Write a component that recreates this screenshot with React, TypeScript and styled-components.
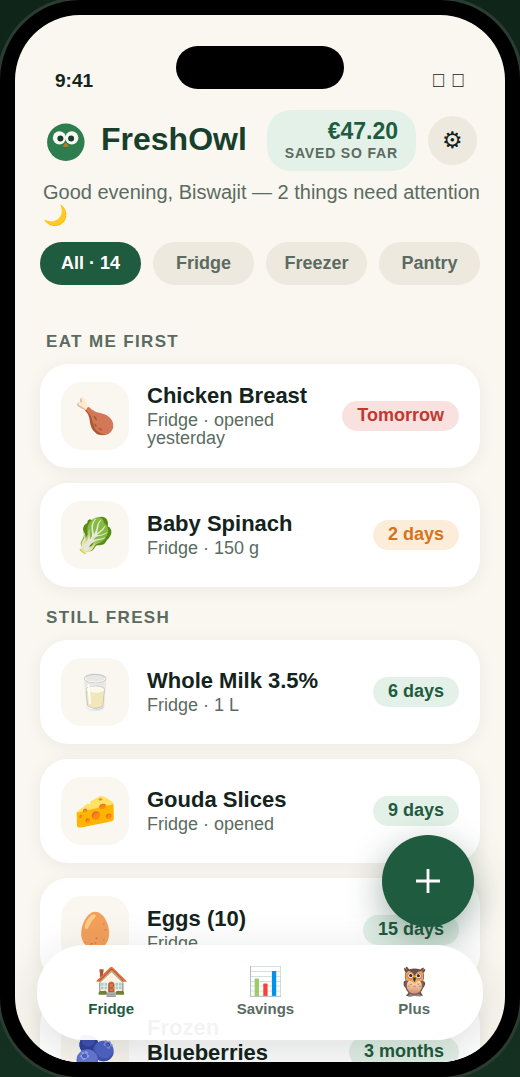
import React from 'react';
import styled, { createGlobalStyle, css } from 'styled-components';

const color = {
  cream: '#faf7f0',
  sand: '#ede9de',
  ink: '#14241c',
  muted: '#5b6b62',
  green: '#1f5c3f',
  deep: '#173f2c',
  mint: '#e3f1e8',
};

const GlobalStyle = createGlobalStyle`
  *, *::before, *::after { box-sizing: border-box; }
  body {
    margin: 0;
    background: linear-gradient(180deg, #10251a 0%, #143021 100%);
    font-family: "Liberation Sans", Arial, sans-serif;
    color: ${color.ink};
  }
  button { font-family: inherit; border: 0; cursor: pointer; padding: 0; }
  h1, h2, h3, p, ul { margin: 0; padding: 0; }
  ul { list-style: none; }
`;

const Phone = styled.div`
  height: 100vh;
  padding: 15px;
  background: #000;
  border-radius: 80px;
  box-shadow: 0 0 0 3px #2b3d33;
  overflow: hidden;
`;

const Screen = styled.div`
  position: relative;
  display: flex;
  flex-direction: column;
  height: 100%;
  background: ${color.cream};
  border-radius: 65px;
  overflow: hidden;
`;

const Island = styled.div`
  position: absolute;
  top: 31px;
  left: 50%;
  width: 168px;
  height: 43px;
  border-radius: 22px;
  background: #000;
  transform: translateX(-50%);
`;

const StatusBar = styled.div`
  display: flex;
  justify-content: space-between;
  padding: 55px 40px 18px;
  font-size: 19px;
  line-height: 22px;
  font-weight: 700;
`;

const StatusIcons = styled.span`
  font-weight: 400;
`;

const Header = styled.header`
  display: flex;
  align-items: center;
  gap: 12px;
  padding: 0 28px;
`;

const Title = styled.h1`
  flex: 1;
  padding-bottom: 3px;
  font-size: 32px;
  line-height: 36px;
  color: ${color.deep};
`;

const Saved = styled.div`
  display: flex;
  flex-direction: column;
  padding: 9px 18px;
  border-radius: 24px;
  background: ${color.mint};
  text-align: right;
`;

const SavedAmount = styled.strong`
  font-size: 23px;
  line-height: 25px;
  color: ${color.green};
`;

const SavedLabel = styled.span`
  font-size: 14px;
  line-height: 18px;
  font-weight: 700;
  letter-spacing: 0.06em;
  text-transform: uppercase;
  color: ${color.muted};
`;

const RoundButton = styled.button`
  width: 49px;
  height: 49px;
  padding-bottom: 2px;
  border-radius: 50%;
  background: ${color.sand};
  color: ${color.ink};
  font-size: 23px;
  line-height: 28px;
`;

const Greeting = styled.p`
  padding: 10px 24px 15px 28px;
  font-size: 20px;
  line-height: 23px;
  color: ${color.muted};
`;

const Filters = styled.div`
  display: flex;
  gap: 12px;
  padding: 0 25px;
`;

const Chip = styled.button<{ $active?: boolean }>`
  flex: 1;
  height: 43px;
  border-radius: 22px;
  background: ${color.sand};
  color: ${color.muted};
  font-size: 18px;
  font-weight: 700;
  ${p => p.$active && css`
    background: ${color.green};
    color: #fff;
  `}
`;

const Pantry = styled.main`
  flex: 1;
  min-height: 0;
  padding: 26px 25px 0;
  overflow: hidden;
`;

const SectionTitle = styled.h2`
  padding: 21px 6px 12px;
  font-size: 17px;
  line-height: 20px;
  letter-spacing: 0.08em;
  text-transform: uppercase;
  color: ${color.muted};
`;

const CardList = styled.ul`
  display: flex;
  flex-direction: column;
  gap: 15px;
`;

const Card = styled.li`
  display: flex;
  align-items: center;
  gap: 18px;
  padding: 18px 21px;
  border-radius: 28px;
  background: #fff;
  box-shadow: 0 3px 18px rgba(20, 36, 28, 0.06);
`;

const Tile = styled.span`
  display: grid;
  place-items: center;
  flex: none;
  width: 68px;
  height: 68px;
  border-radius: 21px;
  background: ${color.cream};
  font-size: 34px;
  line-height: 40px;
`;

const ItemText = styled.div`
  flex: 1;
  min-width: 0;
  padding-bottom: 3px;
`;

const ItemName = styled.h3`
  font-size: 22px;
  line-height: 25px;
`;

const ItemMeta = styled.p`
  margin-top: 3px;
  font-size: 18px;
  line-height: 18px;
  color: ${color.muted};
`;

type Tone = 'urgent' | 'soon' | 'fresh';

const tones: Record<Tone, [string, string]> = {
  urgent: ['#f9e1df', '#c0392f'],
  soon: ['#fcedda', '#d4741c'],
  fresh: [color.mint, color.green],
};

const Badge = styled.span<{ $tone: Tone }>`
  flex: none;
  padding: 4px 15px 6px;
  border-radius: 15px;
  background: ${p => tones[p.$tone][0]};
  color: ${p => tones[p.$tone][1]};
  font-size: 18px;
  line-height: 20px;
  font-weight: 700;
`;

const AddButton = styled.button`
  position: absolute;
  right: 31px;
  bottom: 135px;
  display: grid;
  place-items: center;
  width: 92px;
  height: 92px;
  border-radius: 50%;
  background: ${color.green};
  box-shadow: 0 12px 36px rgba(23, 63, 44, 0.4);
`;

const TabBar = styled.nav`
  position: absolute;
  left: 22px;
  right: 22px;
  bottom: 22px;
  display: flex;
  justify-content: space-around;
  align-items: center;
  height: 95px;
  padding-bottom: 3px;
  border-radius: 48px;
  background: rgba(255, 255, 255, 0.95);
  box-shadow: 0 12px 46px rgba(20, 36, 28, 0.15);
`;

const Tab = styled.a<{ $active?: boolean }>`
  display: flex;
  flex-direction: column;
  align-items: center;
  color: ${p => (p.$active ? color.green : color.muted)};
  font-size: 15px;
  line-height: 18px;
  font-weight: 700;
  text-decoration: none;
`;

const TabIcon = styled.span`
  font-size: 28px;
  line-height: 36px;
  font-weight: 400;
`;

const OwlLogo = () => (
  <svg width="46" height="46" viewBox="0 0 46 46" aria-hidden="true">
    <circle cx="22.8" cy="24.2" r="18.7" fill="#2d7d4f" />
    <circle cx="16.4" cy="19.8" r="6.6" fill="#faf7f0" />
    <circle cx="28.8" cy="19.8" r="6.6" fill="#faf7f0" />
    <circle cx="17.4" cy="20.5" r="3" fill="#173f2c" />
    <circle cx="28.1" cy="20.5" r="3" fill="#173f2c" />
    <path d="M22.8 24.5 L26 28.8 H19.6 Z" fill="#d4741c" />
  </svg>
);

const sections: {
  title: string;
  items: { icon: string; name: string; meta: string; due: string; tone: Tone }[];
}[] = [
  {
    title: 'Eat me first',
    items: [
      { icon: '🍗', name: 'Chicken Breast', meta: 'Fridge · opened yesterday', due: 'Tomorrow', tone: 'urgent' },
      { icon: '🥬', name: 'Baby Spinach', meta: 'Fridge · 150 g', due: '2 days', tone: 'soon' },
    ],
  },
  {
    title: 'Still fresh',
    items: [
      { icon: '🥛', name: 'Whole Milk 3.5%', meta: 'Fridge · 1 L', due: '6 days', tone: 'fresh' },
      { icon: '🧀', name: 'Gouda Slices', meta: 'Fridge · opened', due: '9 days', tone: 'fresh' },
      { icon: '🥚', name: 'Eggs (10)', meta: 'Fridge', due: '15 days', tone: 'fresh' },
      { icon: '🫐', name: 'Frozen Blueberries', meta: 'Freezer', due: '3 months', tone: 'fresh' },
    ],
  },
];

export default function App() {
  return (
    <>
      <GlobalStyle />
      <Phone>
        <Screen>
          <StatusBar>
            <span>9:41</span>
            <StatusIcons aria-hidden="true">{'\u{100647} \u{1006E8}'}</StatusIcons>
          </StatusBar>
          <Island />
          <Header>
            <OwlLogo />
            <Title>FreshOwl</Title>
            <Saved>
              <SavedAmount>€47.20</SavedAmount>
              <SavedLabel>Saved so far</SavedLabel>
            </Saved>
            <RoundButton aria-label="Settings">⚙</RoundButton>
          </Header>
          <Greeting>Good evening, Biswajit — 2 things need attention 🌙</Greeting>
          <Filters>
            <Chip $active>All · 14</Chip>
            <Chip>Fridge</Chip>
            <Chip>Freezer</Chip>
            <Chip>Pantry</Chip>
          </Filters>
          <Pantry>
            {sections.map(section => (
              <section key={section.title}>
                <SectionTitle>{section.title}</SectionTitle>
                <CardList>
                  {section.items.map(item => (
                    <Card key={item.name}>
                      <Tile>{item.icon}</Tile>
                      <ItemText>
                        <ItemName>{item.name}</ItemName>
                        <ItemMeta>{item.meta}</ItemMeta>
                      </ItemText>
                      <Badge $tone={item.tone}>{item.due}</Badge>
                    </Card>
                  ))}
                </CardList>
              </section>
            ))}
          </Pantry>
          <AddButton aria-label="Add item">
            <svg width="26" height="26" viewBox="0 0 26 26" stroke="#fff" strokeWidth="2.8">
              <path d="M13 1V25M1 13H25" />
            </svg>
          </AddButton>
          <TabBar>
            <Tab href="#fridge" $active><TabIcon>🏠</TabIcon>Fridge</Tab>
            <Tab href="#savings"><TabIcon>📊</TabIcon>Savings</Tab>
            <Tab href="#plus"><TabIcon>🦉</TabIcon>Plus</Tab>
          </TabBar>
        </Screen>
      </Phone>
    </>
  );
}
